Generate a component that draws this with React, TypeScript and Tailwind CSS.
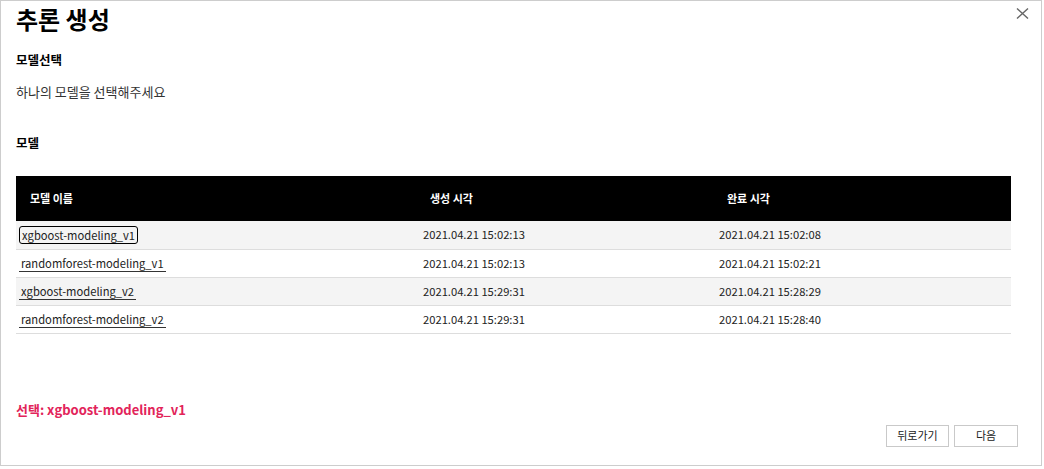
import React from "react";

const rows = [
  { name: "xgboost-modeling_v1", created: "2021.04.21 15:02:13", done: "2021.04.21 15:02:08" },
  { name: "randomforest-modeling_v1", created: "2021.04.21 15:02:13", done: "2021.04.21 15:02:21" },
  { name: "xgboost-modeling_v2", created: "2021.04.21 15:29:31", done: "2021.04.21 15:28:29" },
  { name: "randomforest-modeling_v2", created: "2021.04.21 15:29:31", done: "2021.04.21 15:28:40" },
];

const font = { fontFamily: '"Noto Sans CJK KR", "Noto Sans", sans-serif' };

export default function App() {
  const selected = 0;
  return (
    <div className="w-[1044px] h-[469px] bg-white" style={font}>
      <div className="relative w-[1042px] h-[466px] border border-[#cdcdcd] pl-[15px] flex flex-col text-[#222]">
        {/* close */}
        <button className="absolute right-[12px] top-[6px] w-[14px] h-[12px] flex items-center justify-center">
          <svg width="13" height="11" viewBox="0 0 13 11">
            <path d="M1 0.5 L12 10.5 M12 0.5 L1 10.5" stroke="#666" strokeWidth="1.4" />
          </svg>
        </button>

        <div className="h-[35px] flex items-center text-[24px] font-bold text-black leading-none">
          추론 생성
        </div>

        <div className="mt-[14px] h-[20px] leading-[20px] text-[12.5px] font-bold text-black">모델선택</div>
        <div className="mt-[12px] h-[20px] leading-[20px] text-[13px] text-[#333]">
          하나의 모델을 선택해주세요
        </div>
        <div className="mt-[31px] h-[20px] leading-[20px] text-[12.5px] font-bold text-black">모델</div>

        <table className="mt-[23px] w-[995px] border-collapse table-fixed">
          <thead>
            <tr className="bg-black text-white h-[45px]">
              <th className="w-[402px] text-left pl-[14px] text-[11px] font-bold">모델 이름</th>
              <th className="w-[296px] text-left pl-[12px] text-[11px] font-bold">생성 시각</th>
              <th className="text-left pl-[13px] text-[11px] font-bold">완료 시각</th>
            </tr>
          </thead>
          <tbody>
            {rows.map((r, i) => (
              <tr
                key={r.name}
                className={`h-[28px] border-b border-[#dddddd] text-[11.2px] text-[#222] ${
                  i % 2 === 0 ? "bg-[#f4f4f4]" : "bg-white"
                }`}
              >
                <td className="pl-[3px]">
                  <span
                    className={`inline-block px-[2px] leading-[16px] border-b border-[#333] ${
                      i === selected ? "border border-black rounded-[3px]" : ""
                    }`}
                  >
                    {r.name}
                  </span>
                </td>
                <td className="pl-[5px]">{r.created}</td>
                <td className="pl-[5px]">{r.done}</td>
              </tr>
            ))}
          </tbody>
        </table>

        <div className="mt-[66px] h-[20px] leading-[20px] text-[13px] font-bold text-[#e2245a]">
          선택: {rows[selected].name}
        </div>

        <div className="mt-[5px] flex justify-end gap-[5px] pr-[23px]">
          <button className="w-[63px] h-[22px] border border-[#c9c9c9] bg-white text-[11px] text-[#222]">
            뒤로가기
          </button>
          <button className="w-[64px] h-[22px] border border-[#c9c9c9] bg-white text-[11px] text-[#222]">
            다음
          </button>
        </div>
      </div>
    </div>
  );
}
